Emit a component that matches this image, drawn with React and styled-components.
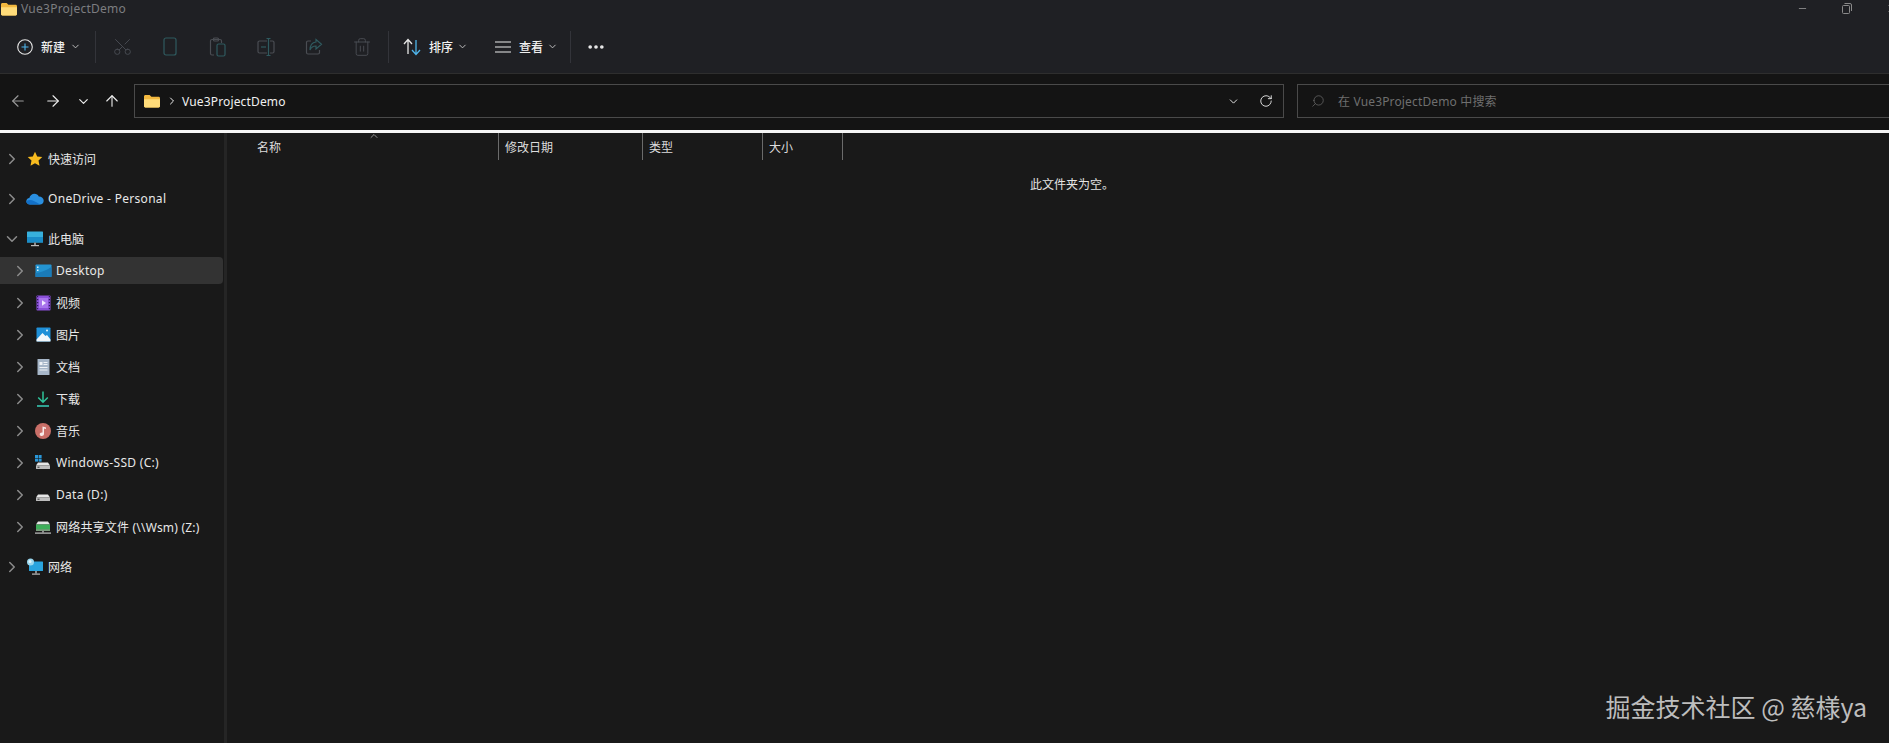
import React from "react";
import styled, { createGlobalStyle } from "styled-components";
import {
  ArrowLeft, ArrowRight, ArrowUp, ChevronDown, ChevronRight, ChevronUp,
  Scissors, Trash2, Search, RotateCw, Minus, X, MoreHorizontal,
} from "lucide-react";

const Global = createGlobalStyle`
  html, body { margin: 0; padding: 0; background: #191919; overflow: hidden; }
  #root { height: 743px; }
`;

const FONT = `"Noto Sans", "Noto Sans CJK SC", sans-serif`;

const Window = styled.div`
  position: relative;
  width: 1889px;
  height: 743px;
  overflow: hidden;
  display: flex;
  flex-direction: column;
  background: #191919;
  color: #e6e6e6;
  font-family: ${FONT};
  font-size: 12px;
`;

const Head = styled.div`
  height: 73px;
  background: #1f2024;
  border-bottom: 1px solid #2e2e2e;
  display: flex;
  flex-direction: column;
`;

const TitleBar = styled.div`
  height: 17px;
  display: flex;
  align-items: center;
  color: #7c7d80;
`;

const TitleText = styled.span`
  margin-left: 3px;
  flex: 1;
  letter-spacing: 0.25px;
`;

const WinButtons = styled.div`
  display: flex;
  align-items: center;
  gap: 34px;
  margin-right: -8px;
  color: #8a8a8a;
`;

const Toolbar = styled.div`
  flex: 1;
  display: flex;
  align-items: center;
  padding-left: 17px;
  padding-top: 3px;
`;

const ToolSep = styled.div`
  width: 1px;
  height: 32px;
  background: #33343a;
  margin: ${(p) => p.$margin || "0"};
`;

const IconButton = styled.div`
  width: 48px;
  display: flex;
  justify-content: center;
  align-items: center;
`;

const TextButton = styled.div`
  display: flex;
  align-items: center;
  gap: ${(p) => p.$gap || 8}px;
  color: #f0f0f0;
  margin-left: ${(p) => p.$left || 0}px;
  font-weight: 500;
`;

const Caret = styled(ChevronDown)`
  margin-left: -3px;
  color: #c8c8c8;
`;

const MoreDots = styled(MoreHorizontal)`
  margin-left: 15px;
  color: #ececec;
`;

const AddressBand = styled.div`
  height: 56px;
  box-sizing: border-box;
  background: #141414;
  display: flex;
  align-items: center;
  padding-bottom: 2px;
`;

const NavArrows = styled.div`
  width: 134px;
  display: flex;
  align-items: center;
  flex: none;
`;

const NavSlot = styled.div`
  display: flex;
  justify-content: center;
  width: 18px;
  margin-left: ${(p) => p.$left}px;
  color: ${(p) => p.$color || "#ececec"};
`;

const AddressBox = styled.div`
  width: 1150px;
  flex: none;
  height: 34px;
  box-sizing: border-box;
  border: 1px solid #4a4a4a;
  display: flex;
  align-items: center;
  padding: 0 10px 0 8px;
  color: #f0f0f0;
`;

const CrumbArrow = styled(ChevronRight)`
  margin-left: 5px;
`;

const Crumb = styled.span`
  flex: 1;
  margin-left: 4px;
  letter-spacing: 0.15px;
`;

const DropArrow = styled(ChevronDown)`
  margin-right: 19px;
`;

const SearchBox = styled.div`
  width: 620px;
  flex: none;
  height: 34px;
  box-sizing: border-box;
  margin-left: 13px;
  border: 1px solid #4a4a4a;
  display: flex;
  align-items: center;
  padding-left: 13px;
  gap: 13px;
  color: #6f6f6f;
  letter-spacing: 0.15px;
`;

const SearchGlyph = styled(Search)`
  transform: scaleX(-1);
`;

const WhiteLine = styled.div`
  height: 3px;
  background: #f6f6f6;
`;

const Body = styled.div`
  flex: 1;
  display: flex;
  min-height: 0;
`;

const Sidebar = styled.nav`
  width: 224px;
  flex: none;
  border-right: 3px solid #252525;
  padding-top: 12px;
  display: flex;
  flex-direction: column;
  gap: 13px;
`;

const Group = styled.div`
  display: flex;
  flex-direction: column;
  gap: 5px;
`;

const Row = styled.div`
  height: 27px;
  width: 223px;
  display: flex;
  align-items: center;
  border-radius: 0 4px 4px 0;
  padding-left: ${(p) => (p.$nested ? 14 : 6)}px;
  box-sizing: border-box;
  background: ${(p) => (p.$active ? "#333333" : "transparent")};
  color: #e8e8e8;
`;

const Chevron = styled.div`
  width: 12px;
  display: flex;
  justify-content: center;
  color: #8c8c8c;

  svg {
    flex: none;
  }
`;

const RowIcon = styled.div`
  width: 18px;
  height: 18px;
  margin: 0 4px 0 8px;
  display: flex;
  align-items: center;
  justify-content: center;
  flex: none;
`;

const RowLabel = styled.span`
  letter-spacing: ${(p) => p.$spacing || 0}px;
`;

const Content = styled.main`
  flex: 1;
  display: flex;
  flex-direction: column;
  position: relative;
`;

const Columns = styled.div`
  height: 27px;
  display: flex;
  align-items: center;
`;

const Column = styled.div`
  width: ${(p) => p.$width}px;
  height: 27px;
  box-sizing: border-box;
  border-right: 1px solid #6b6b6b;
  padding-left: ${(p) => p.$pad || 6}px;
  display: flex;
  align-items: center;
  color: #dcdcdc;
`;

const SortCaret = styled(ChevronUp)`
  position: absolute;
  left: 141px;
  top: -3px;
  color: #b5b5b5;
`;

const EmptyNote = styled.div`
  margin: 15px 0 0 803px;
  color: #e4e4e4;
`;

const Watermark = styled.div`
  position: absolute;
  right: 22px;
  bottom: 21px;
  font-size: 25px;
  line-height: 32px;
  color: #bdbdbd;
  font-family: "Noto Sans CJK SC", "Noto Sans", sans-serif;
`;

const CutGlyph = styled(Scissors)`
  transform: rotate(-90deg);
  color: #484b52;
`;

const BinGlyph = styled(Trash2)`
  color: #4c4f55;
`;

const Folder = ({ size = 18 }) => (
  <svg width={size} height={size} viewBox="0 0 18 18">
    <path d="M1 4.5C1 3.7 1.6 3 2.4 3h4.2l1.8 1.8h7.2c.8 0 1.4.6 1.4 1.4V14c0 .8-.6 1.4-1.4 1.4H2.4C1.6 15.4 1 14.8 1 14z" fill="#f2b83f" />
    <path d="M1 7.2h16V14c0 .8-.6 1.4-1.4 1.4H2.4C1.6 15.4 1 14.8 1 14z" fill="#ffdc7a" />
  </svg>
);

const Star = () => (
  <svg width="16" height="16" viewBox="0 0 16 16">
    <path d="M8 .8l2.2 4.7 5.1.6-3.8 3.5 1 5.1L8 12.2l-4.5 2.5 1-5.1L.7 6.1l5.1-.6z" fill="#f7bb1f" />
  </svg>
);

const Cloud = () => (
  <svg width="18" height="12" viewBox="0 0 18 12">
    <path d="M4 11.5C1.8 11.5.3 10 .3 8.3c0-1.8 1.3-3 3-3.2C4 2.6 6 .8 8.5.8c1.9 0 3.5 1 4.3 2.7 2.7-.1 4.9 1.8 4.9 4.3 0 2.1-1.6 3.7-3.6 3.7z" fill="#2a8fe0" />
    <path d="M4 11.5C1.8 11.5.3 10 .3 8.3c2-1.5 5-1.7 7.5-.3 2.5 1.2 6.5 3.4 6.5 3.5z" fill="#1270c8" />
  </svg>
);

const Monitor = () => (
  <svg width="18" height="16" viewBox="0 0 18 16">
    <rect x="1" y="0.5" width="16" height="11" rx="0.6" fill="#37b0dc" />
    <rect x="1" y="6" width="16" height="5.5" fill="#1a8cc8" />
    <rect x="8" y="11.5" width="2" height="2.5" fill="#8c8c8c" />
    <rect x="5" y="14" width="8" height="1.2" fill="#b9b9b9" />
  </svg>
);

const Network = () => (
  <svg width="18" height="18" viewBox="0 0 18 18">
    <rect x="3" y="3.5" width="14" height="9.5" rx="0.6" fill="#2aa4de" />
    <rect x="9" y="13" width="2" height="2.5" fill="#8c8c8c" />
    <rect x="6" y="15.5" width="8" height="1.2" fill="#b9b9b9" />
    <circle cx="4.5" cy="4" r="3.5" fill="#9ad7ee" />
    <circle cx="4" cy="3.5" r="1.5" fill="#e3f5fb" />
  </svg>
);

const DesktopIcon = () => (
  <svg width="17" height="14" viewBox="0 0 17 14">
    <rect x="0.5" y="0.5" width="16" height="12.5" rx="0.8" fill="#2494d2" />
    <path d="M.5 9c5-.5 10-2 16-6v10H.5z" fill="#1a7bb8" />
    <rect x="2" y="2.5" width="1.5" height="1.5" fill="#d8f2fb" />
    <rect x="2" y="5.5" width="1.5" height="1.5" fill="#d8f2fb" />
  </svg>
);

const VideoIcon = () => (
  <svg width="15" height="16" viewBox="0 0 15 16">
    <rect x="0.5" y="0.5" width="14" height="15" rx="0.8" fill="#8a4fd8" />
    <rect x="3" y="3" width="9" height="10" fill="#a874ec" />
    <path d="M6 5.2l4 2.8-4 2.8z" fill="#f3ecff" />
    {[2, 5, 8, 11, 14].map((y) => (
      <g key={y}>
        <rect x="1" y={y - 1} width="1.2" height="1.2" fill="#2e1a58" />
        <rect x="12.8" y={y - 1} width="1.2" height="1.2" fill="#2e1a58" />
      </g>
    ))}
  </svg>
);

const PictureIcon = () => (
  <svg width="15" height="15" viewBox="0 0 15 15">
    <rect x="0.5" y="0.5" width="14" height="14" rx="0.8" fill="#1f90d8" />
    <path d="M.5 12.5L6.5 6l3 3 1.5-1 3.5 4.5v2h-14z" fill="#f2f7fb" />
    <circle cx="11" cy="3.5" r="1" fill="#e4f4fc" />
  </svg>
);

const DocIcon = () => (
  <svg width="13" height="16" viewBox="0 0 13 16">
    <rect x="0.5" y="0" width="12" height="16" rx="0.6" fill="#a6b6c8" />
    <rect x="2.5" y="3" width="3" height="3" fill="#eef2f6" />
    <rect x="6.5" y="3" width="4" height="1" fill="#eef2f6" />
    <rect x="6.5" y="5" width="4" height="1" fill="#eef2f6" />
    <rect x="2.5" y="8" width="8" height="1" fill="#eef2f6" />
    <rect x="2.5" y="10.5" width="8" height="1" fill="#eef2f6" />
  </svg>
);

const DownloadIcon = () => (
  <svg width="14" height="16" viewBox="0 0 14 16" fill="none" stroke="#2fc39b" strokeWidth="1.5">
    <path d="M7 .5V11M2.2 6.5L7 11.3l4.8-4.8" />
    <path d="M1 15h12" stroke="#34b3a0" strokeWidth="1.8" />
  </svg>
);

const MusicIcon = () => (
  <svg width="16" height="16" viewBox="0 0 16 16">
    <circle cx="8" cy="8" r="8" fill="#c96f68" />
    <path d="M7.5 3.5l3.5 1v1.6L9 5.6V11c0 1.2-1 2-2.2 2S4.7 12.3 4.7 11.2 5.700 9.400 6.800 9.400c.3 0 .5 0 .7.1z" fill="#f8ecea" />
  </svg>
);

const Drive = ({ windows }) => (
  <svg width="16" height="16" viewBox="0 0 16 16">
    {windows && (
      <g fill="#2a97d8">
        <rect x="0" y="0" width="3" height="3" />
        <rect x="3.6" y="0" width="3" height="3" />
        <rect x="0" y="3.6" width="3" height="3" />
        <rect x="3.6" y="3.6" width="3" height="3" />
      </g>
    )}
    <path d="M3 7.5h10l2 3H1z" fill="#e6e6e6" />
    <rect x="1" y="10.5" width="14" height="3.5" rx="0.5" fill="#bdbdbd" />
    <rect x="2.5" y="11.7" width="2" height="1" fill="#333" />
  </svg>
);

const NetDrive = () => (
  <svg width="16" height="16" viewBox="0 0 16 16">
    <path d="M3 2.5h10l2 3H1z" fill="#e6e6e6" />
    <rect x="1" y="5.5" width="14" height="5" fill="#3fae5a" />
    <rect x="1" y="10.5" width="14" height="1.2" fill="#a6d8a8" />
    <rect x="7" y="11.7" width="2" height="1.8" fill="#8c8c8c" />
    <rect x="0" y="13.5" width="16" height="1.2" fill="#c4c4c4" />
  </svg>
);

const CopyIcon = () => (
  <svg width="16" height="20" viewBox="0 0 16 20" fill="none" stroke="#2f5a5f" strokeWidth="1.2">
    <rect x="2" y="1" width="12" height="17" rx="2" />
  </svg>
);

const PasteIcon = () => (
  <svg width="18" height="20" viewBox="0 0 18 20" fill="none" stroke="#4a4d53" strokeWidth="1.2">
    <path d="M5 18H3a1.5 1.5 0 0 1-1.5-1.5V4A1.5 1.5 0 0 1 3 2.5h8A1.5 1.5 0 0 1 12.5 4v2" />
    <rect x="4.5" y="1" width="5" height="3" rx="1" />
    <rect x="8" y="7" width="8" height="12" rx="1.5" stroke="#2f5a5f" />
  </svg>
);

const RenameIcon = () => (
  <svg width="18" height="20" viewBox="0 0 18 20" fill="none" stroke="#4a4d53" strokeWidth="1.2">
    <path d="M10 4H2.5A1.5 1.5 0 0 0 1 5.5v9A1.5 1.5 0 0 0 2.5 16H10" />
    <path d="M13 4h2.5A1.5 1.5 0 0 1 17 5.5v9a1.5 1.5 0 0 1-1.5 1.5H13" />
    <path d="M11.5 1.5v17M9.5 1.5h4M9.5 18.5h4" stroke="#2f5a5f" />
    <path d="M4 10h5" stroke="#2f5a5f" />
  </svg>
);

const ShareIcon = () => (
  <svg width="18" height="18" viewBox="0 0 18 18" fill="none" stroke="#4a4d53" strokeWidth="1.2">
    <path d="M6 3H3a1.5 1.5 0 0 0-1.5 1.5v10A1.5 1.5 0 0 0 3 16h10a1.5 1.5 0 0 0 1.5-1.5V12" />
    <path d="M11 1.5l5.5 4.7-5.5 4.7V8C8 8 6 9.5 5 12c0-4 2-7.5 6-8z" stroke="#2f5a5f" />
  </svg>
);

const SortIcon = () => (
  <svg width="20" height="20" viewBox="0 0 20 20" fill="none" strokeWidth="1.3">
    <path d="M6 17V3M2 7l4-4.5L10 7" stroke="#e6e6e6" />
    <path d="M14 3v14M10 13l4 4.5 4-4.5" stroke="#4fb4ea" />
  </svg>
);

const ListIcon = () => (
  <svg width="18" height="14" viewBox="0 0 18 14" fill="none" stroke="#ececec" strokeWidth="1.2">
    <path d="M1 2h16M1 7h16M1 12h16" />
  </svg>
);

const Restore = () => (
  <svg width="10" height="11" viewBox="0 0 10 11" fill="none" stroke="#8a8a8a">
    <rect x="0.5" y="2.5" width="7" height="8" rx="1" />
    <path d="M2.5 .5H8a1.5 1.5 0 0 1 1.5 1.5v6" />
  </svg>
);

const NewIcon = () => (
  <svg width="16" height="16" viewBox="0 0 16 16" fill="none">
    <circle cx="8" cy="8" r="7.3" stroke="#e6e6e6" strokeWidth="1.1" />
    <path d="M8 4.5v7M4.5 8h7" stroke="#4fb4ea" strokeWidth="1.1" />
  </svg>
);

const libraries = [
  { label: "Desktop", icon: <DesktopIcon />, active: true, spacing: 0.3 },
  { label: "视频", icon: <VideoIcon /> },
  { label: "图片", icon: <PictureIcon /> },
  { label: "文档", icon: <DocIcon /> },
  { label: "下载", icon: <DownloadIcon /> },
  { label: "音乐", icon: <MusicIcon /> },
  { label: "Windows-SSD (C:)", icon: <Drive windows />, spacing: 0.3 },
  { label: "Data (D:)", icon: <Drive />, spacing: 0.3 },
  { label: "网络共享文件 (\\\\Wsm) (Z:)", icon: <NetDrive />, spacing: 0.2 },
];

const SideRow = ({ label, icon, nested, active, open, spacing }) => (
  <Row $nested={nested} $active={active}>
    <Chevron>{open ? <ChevronDown size={18} strokeWidth={2} /> : <ChevronRight size={18} strokeWidth={2} />}</Chevron>
    <RowIcon>{icon}</RowIcon>
    <RowLabel $spacing={spacing}>{label}</RowLabel>
  </Row>
);

export default function App() {
  return (
    <Window>
      <Global />
      <Head>
        <TitleBar>
          <Folder size={18} />
          <TitleText>Vue3ProjectDemo</TitleText>
          <WinButtons>
            <Minus size={11} />
            <Restore />
            <X size={11} />
          </WinButtons>
        </TitleBar>
        <Toolbar>
          <TextButton><NewIcon />新建<Caret size={11} /></TextButton>
          <ToolSep $margin="0 2px 0 14px" />
          <IconButton><CutGlyph size={21} strokeWidth={1.1} /></IconButton>
          <IconButton><CopyIcon /></IconButton>
          <IconButton><PasteIcon /></IconButton>
          <IconButton><RenameIcon /></IconButton>
          <IconButton><ShareIcon /></IconButton>
          <IconButton><BinGlyph size={20} strokeWidth={1.1} /></IconButton>
          <ToolSep $margin="0 0 0 2px" />
          <TextButton $left={13} $gap={7}><SortIcon />排序<Caret size={11} /></TextButton>
          <TextButton $left={26} $gap={7}><ListIcon />查看<Caret size={11} /></TextButton>
          <ToolSep $margin="0 0 0 12px" />
          <MoreDots size={20} strokeWidth={2.4} />
        </Toolbar>
      </Head>
      <AddressBand>
        <NavArrows>
          <NavSlot $left={9} $color="#9a9a9a"><ArrowLeft size={18} strokeWidth={1.5} /></NavSlot>
          <NavSlot $left={17}><ArrowRight size={18} strokeWidth={1.5} /></NavSlot>
          <NavSlot $left={12}><ChevronDown size={15} strokeWidth={1.9} /></NavSlot>
          <NavSlot $left={11}><ArrowUp size={18} strokeWidth={1.5} /></NavSlot>
        </NavArrows>
        <AddressBox>
          <Folder size={18} />
          <CrumbArrow size={12} strokeWidth={2} />
          <Crumb>Vue3ProjectDemo</Crumb>
          <DropArrow size={13} strokeWidth={1.7} />
          <RotateCw size={14} strokeWidth={1.5} />
        </AddressBox>
        <SearchBox>
          <SearchGlyph size={14} strokeWidth={1.2} />
          <span>在 Vue3ProjectDemo 中搜索</span>
        </SearchBox>
      </AddressBand>
      <WhiteLine />
      <Body>
        <Sidebar>
          <SideRow label="快速访问" icon={<Star />} />
          <SideRow label="OneDrive - Personal" icon={<Cloud />} spacing={0.3} />
          <Group>
            <SideRow label="此电脑" icon={<Monitor />} open />
            {libraries.map((item) => (
              <SideRow key={item.label} nested {...item} />
            ))}
          </Group>
          <SideRow label="网络" icon={<Network />} />
        </Sidebar>
        <Content>
          <Columns>
            <SortCaret size={12} strokeWidth={1.5} />
            <Column $width={272} $pad={30}>名称</Column>
            <Column $width={144}>修改日期</Column>
            <Column $width={120}>类型</Column>
            <Column $width={80}>大小</Column>
          </Columns>
          <EmptyNote>此文件夹为空。</EmptyNote>
        </Content>
      </Body>
      <Watermark>掘金技术社区 @ 慈様ya</Watermark>
    </Window>
  );
}
